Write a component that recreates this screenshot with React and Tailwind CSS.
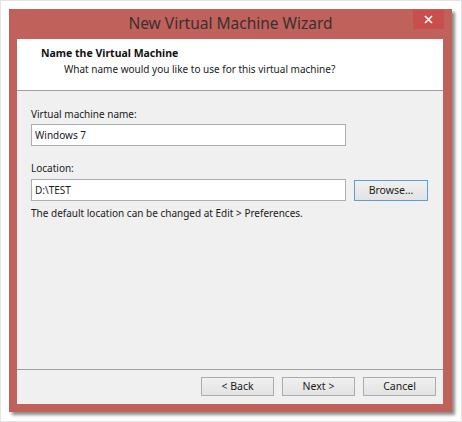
import React from 'react';

const font = { fontFamily: '"Segoe UI", "Noto Sans", "Open Sans", sans-serif' };

const WinButton = ({ children, focused }) => (
  <button
    className={`h-[19px] w-[73px] text-[10.5px] text-[#1a1a1a] bg-gradient-to-b from-[#f0f0f0] to-[#e3e3e3] border ${
      focused ? 'border-[#5aa0d8] w-[74px] h-[21px]' : 'border-[#acacac]'
    } flex items-center justify-center leading-none`}
  >
    {children}
  </button>
);

const App = () => {
  return (
    <div className="w-[462px] h-[422px] bg-white p-[8px] border border-[#e4e4e4]" style={font}>
      <div className="w-[443px] h-[403px] bg-[#c0615c] flex flex-col shadow-[3px_3px_3px_rgba(0,0,0,0.45)]">
        {/* title bar */}
        <div className="h-[30px] flex items-start relative">
          <div className="flex-1 text-center text-[15.5px] text-[#3a3030] pt-[3px]">
            New Virtual Machine Wizard
          </div>
          <div className="absolute right-[8px] top-[1px] w-[31px] h-[19px] bg-[#c94f4d] flex items-center justify-center">
            <svg width="9" height="9" viewBox="0 0 9 9">
              <path d="M1 1L8 8M8 1L1 8" stroke="white" strokeWidth="1.6" />
            </svg>
          </div>
        </div>

        {/* client */}
        <div className="mx-[8px] flex-1 flex flex-col bg-[#f0f0f0] mb-[8px] mr-[9px]">
          <div className="bg-white h-[52px] border-b border-[#a0a0a0] pt-[6px]">
            <div className="text-[10.5px] font-bold text-[#111] pl-[24px] leading-[16px]">
              Name the Virtual Machine
            </div>
            <div className="text-[10px] text-[#1a1a1a] pl-[47px] leading-[16px]">
              What name would you like to use for this virtual machine?
            </div>
          </div>

          <div className="flex-1 px-[14px] pt-[15px] text-[10px] text-[#1a1a1a]">
            <div className="leading-[16px]">Virtual machine name:</div>
            <div className="mt-[2px] w-[315px] h-[22px] bg-white border border-[#abadb3] flex items-center px-[3px]">
              Windows 7
            </div>
            <div className="mt-[14px] leading-[16px]">Location:</div>
            <div className="mt-[3px] flex items-center gap-[8px]">
              <div className="w-[315px] h-[22px] bg-white border border-[#abadb3] flex items-center px-[3px]">
                D:\TEST
              </div>
              <WinButton focused>Browse...</WinButton>
            </div>
            <div className="mt-[4px] leading-[16px]">The default location can be changed at Edit &gt; Preferences.</div>
          </div>

          <div className="h-[35px] border-t border-[#a0a0a0] flex items-start justify-end gap-[8px] pt-[7px] pr-[7px]">
            <WinButton>&lt; Back</WinButton>
            <WinButton>Next &gt;</WinButton>
            <WinButton>Cancel</WinButton>
          </div>
        </div>
      </div>
    </div>
  );
};

export default App;
